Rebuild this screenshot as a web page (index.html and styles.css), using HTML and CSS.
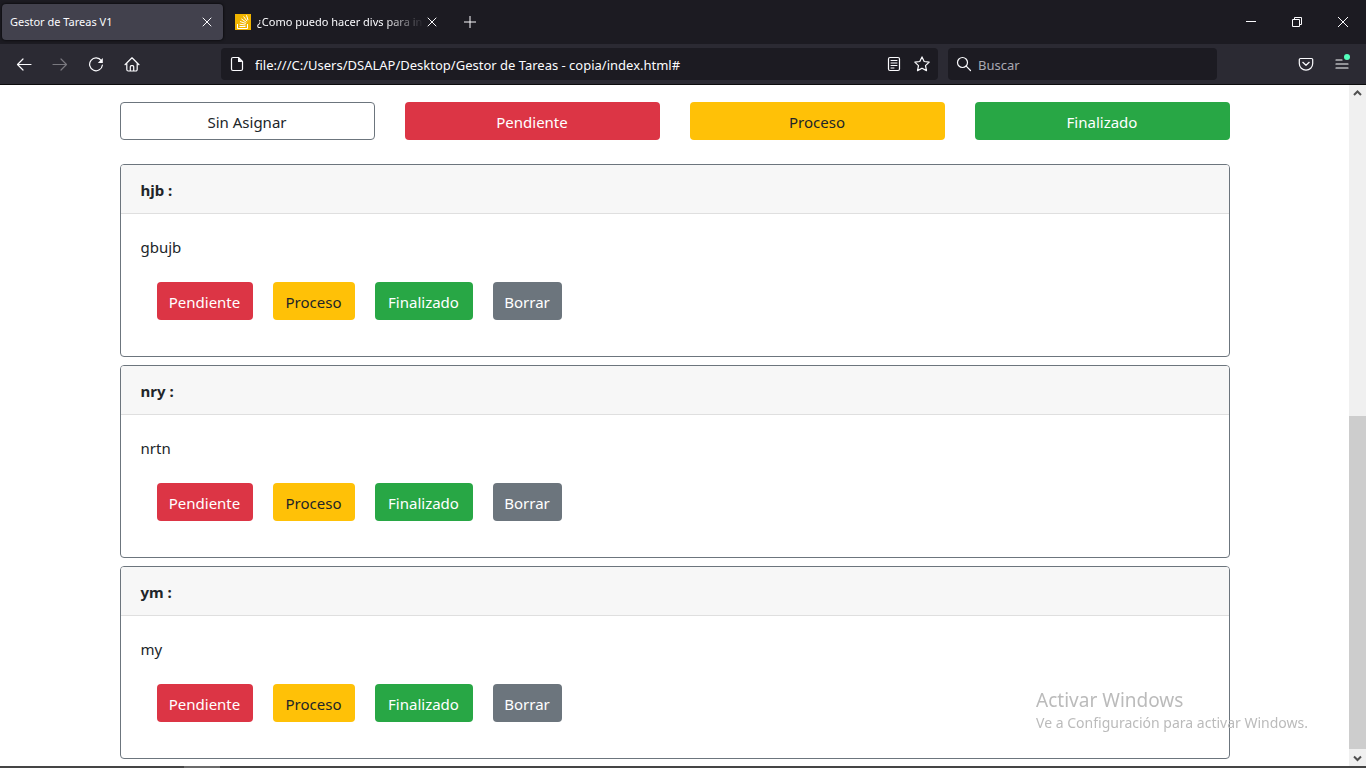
FILE: index.html
```html
<!DOCTYPE html>
<html lang="es">
<head>
<meta charset="utf-8">
<title>Gestor de Tareas V1</title>
<link rel="stylesheet" href="styles.css">
</head>
<body>
<header class="browser">
  <div class="tabbar">
    <div class="tab tab-active">
      <span class="tab-title">Gestor de Tareas V1</span>
      <button class="tab-close" aria-label="Cerrar pestaña"><svg width="10" height="10" viewBox="0 0 10 10"><path d="M1 1l8 8M9 1l-8 8"/></svg></button>
    </div>
    <div class="tab">
      <svg class="favicon" width="16" height="16" viewBox="0 0 16 16"><path class="favicon-bg" d="M0 0h16v16H0z"/><path d="M2.500 10v4.500h10V10M4.500 12.500h6M4.500 10.200l6 .8M5 7.500l5.800 2M6.300 4.800l5 3.500M8.500 2.500l3.600 4.700M11.500 1.200l1.500 5"/></svg>
      <span class="tab-title tab-fade">¿Como puedo hacer divs para in</span>
      <button class="tab-close" aria-label="Cerrar pestaña"><svg width="10" height="10" viewBox="0 0 10 10"><path d="M1 1l8 8M9 1l-8 8"/></svg></button>
    </div>
    <button class="new-tab" aria-label="Nueva pestaña"><svg width="12" height="12" viewBox="0 0 12 12"><path d="M6 0v12M0 6h12"/></svg></button>
    <div class="window-controls">
      <button aria-label="Minimizar"><svg class="thin" width="10" height="10" viewBox="0 0 10 10"><path d="M0 4.500h10"/></svg></button>
      <button aria-label="Restaurar"><svg class="thin" width="10" height="10" viewBox="0 0 10 10"><path d="M.5 2.500h7v7h-7zM2.500 2.500v-2h7v7h-2"/></svg></button>
      <button aria-label="Cerrar"><svg class="thin" width="10" height="10" viewBox="0 0 10 10"><path d="M0 0l10 10M10 0L0 10"/></svg></button>
    </div>
  </div>
  <div class="toolbar">
    <button class="tool" aria-label="Atrás"><svg width="16" height="16" viewBox="0 0 16 16"><path d="M15 8.500H1.500M7 3L1.500 8.500 7 14"/></svg></button>
    <button class="tool" aria-label="Adelante" disabled><svg width="16" height="16" viewBox="0 0 16 16"><path d="M1 8.500h13.500M9 3l5.500 5.500L9 14"/></svg></button>
    <button class="tool" aria-label="Recargar"><svg width="16" height="16" viewBox="0 0 16 16"><path d="M13.300 4.700A6.400 6.400 0 1 0 14.400 9"/><path class="solid" d="M14.800 2v5h-5z"/></svg></button>
    <button class="tool" aria-label="Inicio"><svg width="16" height="16" viewBox="0 0 16 16"><path d="M1 8.700l7-6.900 7 6.900M2.800 7.300v6.200A1.500 1.500 0 0 0 4.300 15h7.400a1.500 1.500 0 0 0 1.500-1.500V7.300M6.300 15v-4.300a1 1 0 0 1 1-1h1.400a1 1 0 0 1 1 1V15"/></svg></button>
    <span class="spring"></span>
    <div class="field url">
      <svg width="16" height="16" viewBox="0 0 16 16"><path d="M4 1.500h5.500l4 4V13a1.500 1.500 0 0 1-1.500 1.500H4A1.500 1.500 0 0 1 2.500 13V3A1.500 1.500 0 0 1 4 1.500z"/><path class="solid" d="M9 1.500V6h4.500z"/></svg>
      <input type="text" aria-label="Dirección" value="file:///C:/Users/DSALAP/Desktop/Gestor de Tareas - copia/index.html#">
      <button aria-label="Vista de lectura"><svg width="16" height="16" viewBox="0 0 16 16"><rect x="2.500" y="1.500" width="11" height="13" rx="1.500"/><path class="lines" d="M5 4.500h6M5 7h6M5 9.500h6M5 12h3"/></svg></button>
      <button aria-label="Añadir a marcadores"><svg width="16" height="16" viewBox="0 0 16 16"><path d="M8 .9l2.200 4.600 5 .6-3.700 3.500 1 5L8 12.200l-4.500 2.400 1-5L.8 6.100l5-.6z"/></svg></button>
    </div>
    <div class="field search">
      <svg width="16" height="16" viewBox="0 0 16 16"><circle cx="6.500" cy="6.500" r="5"/><path d="M10.200 10.200l4.300 4.300"/></svg>
      <input type="text" aria-label="Buscar" placeholder="Buscar">
    </div>
    <span class="spring"></span>
    <button class="tool" aria-label="Pocket"><svg width="16" height="16" viewBox="0 0 16 16"><path d="M2.500 2.500h11a1.200 1.200 0 0 1 1.200 1.200V7.500a6.700 6.700 0 0 1-13.400 0V3.700a1.200 1.200 0 0 1 1.200-1.200zM4.800 6.300L8 9.300l3.200-3"/></svg></button>
    <button class="tool menu" aria-label="Menú"><svg width="16" height="16" viewBox="0 0 16 16"><path d="M2 4h6M2 8h12M2 12h12"/></svg><span class="dot"></span></button>
  </div>
</header>
<div class="viewport">
  <main>
    <div class="container">
      <nav class="filters">
        <button class="btn outline">Sin Asignar</button>
        <button class="btn danger">Pendiente</button>
        <button class="btn warning">Proceso</button>
        <button class="btn success">Finalizado</button>
      </nav>
      <section class="cards">
        <article class="card">
          <h2>hjb :</h2>
          <div class="card-body"><p>gbujb</p>
            <div class="actions"><button class="btn danger">Pendiente</button><button class="btn warning">Proceso</button><button class="btn success">Finalizado</button><button class="btn secondary">Borrar</button></div>
          </div>
        </article>
        <article class="card">
          <h2>nry :</h2>
          <div class="card-body"><p>nrtn</p>
            <div class="actions"><button class="btn danger">Pendiente</button><button class="btn warning">Proceso</button><button class="btn success">Finalizado</button><button class="btn secondary">Borrar</button></div>
          </div>
        </article>
        <article class="card">
          <h2>ym :</h2>
          <div class="card-body"><p>my</p>
            <div class="actions"><button class="btn danger">Pendiente</button><button class="btn warning">Proceso</button><button class="btn success">Finalizado</button><button class="btn secondary">Borrar</button></div>
          </div>
        </article>
      </section>
    </div>
  </main>
  <div class="scrollbar">
    <svg width="17" height="17" viewBox="0 0 17 17"><path d="M5 10l3.500-3.500L12 10"/></svg>
    <div class="track"><div class="thumb"></div></div>
    <svg width="17" height="17" viewBox="0 0 17 17"><path d="M5 7.500L8.500 11 12 7.500"/></svg>
  </div>
</div>
<div class="taskbar"><span class="task"></span></div>
<aside class="watermark"><strong>Activar Windows</strong><span>Ve a Configuración para activar Windows.</span></aside>
</body>
</html>
```
FILE: styles.css
```css
* { box-sizing: border-box; }
body {
  margin: 0;
  height: 100vh;
  display: flex;
  flex-direction: column;
  overflow: hidden;
  background: #fff;
  color: #212529;
  font: 15px/24px "Noto Sans", "Open Sans", sans-serif;
}
button, input { font: inherit; color: inherit; border: 0; background: none; padding: 0; }
svg { display: block; flex: none; }

.browser { flex: none; background: #2b2a33; color: #fbfbfe; border-bottom: 1px solid #0c0c0d; }
.browser svg { fill: none; stroke: currentColor; stroke-width: 1.2; stroke-linejoin: round; stroke-linecap: round; }
.browser svg .solid { fill: currentColor; stroke: none; }
.browser svg .lines { stroke-width: 1; }
.browser svg.thin { stroke-width: 1; stroke-linecap: butt; stroke-linejoin: miter; }
.browser button { display: flex; align-items: center; justify-content: center; }
.tabbar { display: flex; height: 44px; padding-left: 2px; background: #1c1b22; align-items: center; }
.tab { display: flex; align-items: center; width: 221px; height: 36px; padding: 0 8px; border-radius: 4px; font-size: 11px; }
.tab + .tab { width: 213px; margin-left: 4px; padding-right: 0; }
.tab-active { background: #42414d; box-shadow: 0 0 3px #000; }
.tab-title { flex: 1; min-width: 0; white-space: nowrap; }
.tab-fade { margin-left: 6px; mask-image: linear-gradient(to left, transparent, #000 40px); }
.tab-close { width: 16px; height: 24px; }
.browser .tab-close svg, .browser .new-tab svg { stroke-width: 1; }
.browser .favicon { stroke: #fff; stroke-width: 1; stroke-linecap: butt; stroke-linejoin: miter; }
.browser .favicon-bg { fill: #f0b400; stroke: none; }
.new-tab { width: 36px; height: 36px; margin-left: 12px; }
.window-controls { display: flex; align-self: stretch; margin-left: auto; }
.window-controls button { width: 46px; }

.toolbar { display: flex; align-items: center; height: 40px; padding: 0 6px; }
.tool { width: 36px; height: 32px; position: relative; }
.tool:disabled { color: #79787f; }
.spring { flex: 1 1 71px; }
.field { display: flex; align-items: center; height: 32px; border-radius: 4px; background: #1c1b22; font-size: 13px; padding: 0 8px; }
.field input { flex: 1; min-width: 0; height: 32px; margin-left: 10px; padding-top: 2px; outline: 0; }
.url { flex: 10 1 717px; }
.url button { margin-left: 12px; width: 16px; height: 32px; }
.search { flex: 4 1 269px; margin-left: 10px; }
.search input { margin-left: 6px; }
.search input::placeholder { color: #a9a9b2; opacity: 1; }
.dot { position: absolute; top: 6px; right: 10px; width: 6px; height: 6px; border-radius: 50%; background: #54ffbd; }

.viewport { flex: 1; display: flex; min-height: 0; }
main { flex: 1; overflow: hidden; padding-top: 17px; }
.container { max-width: 1140px; margin: 0 auto; padding: 0 15px; }
.filters { display: grid; grid-template-columns: repeat(4, 1fr); gap: 30px; margin-bottom: 24px; }
.btn { height: 38px; padding: 2px 12px 0; border-radius: 4px; color: #fff; text-align: center; white-space: nowrap; }
.outline { border: 1px solid #6c757d; color: #212529; }
.danger { background: #dc3545; }
.warning { background: #ffc107; color: #212529; }
.success { background: #28a745; }
.secondary { background: #6c757d; }
.cards { display: grid; gap: 8px; }
.card { border: 1px solid #6c757d; border-radius: 4px; overflow: hidden; }
.card h2 { margin: 0; padding: 13px 20px 11px; font-size: 15px; line-height: 24px; font-weight: 700; background: #f7f7f7; border-bottom: 1px solid #dfdfdf; }
.card-body { padding: 21px 20px 20px; }
.card-body p { margin: 0; }
.actions { display: flex; gap: 20px; padding: 23px 16px 16px; }
.actions .btn { padding: 2px 0 0; width: 96px; }
.actions .warning { width: 82px; }
.actions .success { width: 98px; }
.actions .secondary { width: 69px; }

.scrollbar { flex: none; display: flex; flex-direction: column; width: 17px; background: #f0f0f0; }
.scrollbar svg { fill: none; stroke: #505050; stroke-width: 2; }
.track { flex: 1; display: flex; flex-direction: column; justify-content: flex-end; }
.thumb { height: 51.400%; background: #cdcdcd; }
.taskbar { flex: none; height: 2px; background: #454545; }
.task { display: block; width: 36px; height: 2px; margin-left: 184px; background: #6b6b6b; }
.watermark { position: fixed; right: 58px; bottom: 35px; display: flex; flex-direction: column; color: #bbb; font-size: 14px; line-height: 20px; pointer-events: none; }
.watermark strong { font-size: 19px; line-height: 26px; font-weight: 400; }
```
